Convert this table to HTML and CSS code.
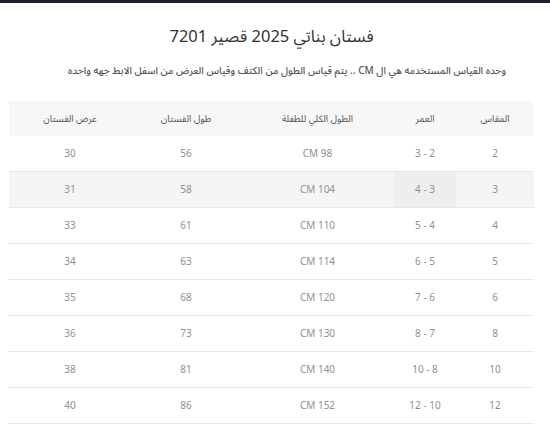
FILE: index.html
```html
<!DOCTYPE html>
<html lang="ar" dir="rtl">
<head>
<meta charset="utf-8">
<link rel="stylesheet" href="styles.css">
</head>
<body>
<div class="topbar"></div>
<div class="page">
  <h1 class="title">فستان بناتي 2025 قصير 7201</h1>
  <p class="note">وحده القياس المستخدمه هي ال CM .. يتم قياس الطول من الكتف وقياس العرض من اسفل الابط جهه واحده</p>
  <table class="sizes">
    <colgroup>
      <col class="c1"><col class="c2"><col class="c3"><col class="c4"><col class="c5">
    </colgroup>
    <thead>
      <tr><th>المقاس</th><th>العمر</th><th>الطول الكلي للطفلة</th><th>طول الفستان</th><th>عرض الفستان</th></tr>
    </thead>
    <tbody>
      <tr><td>2</td><td>2 - 3</td><td>CM 98</td><td>56</td><td>30</td></tr>
      <tr class="hover"><td>3</td><td class="hcell">3 - 4</td><td>CM 104</td><td>58</td><td>31</td></tr>
      <tr><td>4</td><td>4 - 5</td><td>CM 110</td><td>61</td><td>33</td></tr>
      <tr><td>5</td><td>5 - 6</td><td>CM 114</td><td>63</td><td>34</td></tr>
      <tr><td>6</td><td>6 - 7</td><td>CM 120</td><td>68</td><td>35</td></tr>
      <tr><td>8</td><td>7 - 8</td><td>CM 130</td><td>73</td><td>36</td></tr>
      <tr><td>10</td><td>8 - 10</td><td>CM 140</td><td>81</td><td>38</td></tr>
      <tr><td>12</td><td>10 - 12</td><td>CM 152</td><td>86</td><td>40</td></tr>
    </tbody>
  </table>
</div>
</body>
</html>
```
FILE: styles.css
```css
html, body {
  margin: 0;
  padding: 0;
  background: #ffffff;
}
body {
  font-family: "Noto Sans Arabic", "Noto Naskh Arabic", "Open Sans", "DejaVu Sans", sans-serif;
  color: #333;
}
.topbar {
  height: 3px;
  background: #1b2030;
}
.page {
  width: 525px;
  margin: 0 16px 0 9px;
}
.title {
  margin: 0;
  padding-top: 20px;
  height: 28px;
  font-size: 16.5px;
  font-weight: 400;
  line-height: 28px;
  text-align: center;
  color: #333;
}
.note {
  margin: 13px 28px 0 0;
  font-size: 10px;
  line-height: 14px;
  font-weight: 500;
  color: #555;
  height: 37px;
  white-space: nowrap;
}
.sizes {
  width: 525px;
  border-collapse: collapse;
  table-layout: fixed;
}
.c1 { width: 78px; }
.c2 { width: 62px; }
.c3 { width: 153px; }
.c4 { width: 110px; }
.c5 { width: 122px; }
.sizes th {
  background: #f7f7f7;
  height: 35px;
  padding: 0;
  font-size: 9.5px;
  font-weight: 400;
  color: #555;
  text-align: center;
}
.sizes td {
  height: 35px;
  padding: 0;
  border-bottom: 1px solid #e6e6e6;
  font-size: 10px;
  color: #909090;
  text-align: center;
}
.sizes tr.hover td {
  background: #f5f5f5;
}
.sizes tr.hover td.hcell {
  background: #eeeeee;
}
```
